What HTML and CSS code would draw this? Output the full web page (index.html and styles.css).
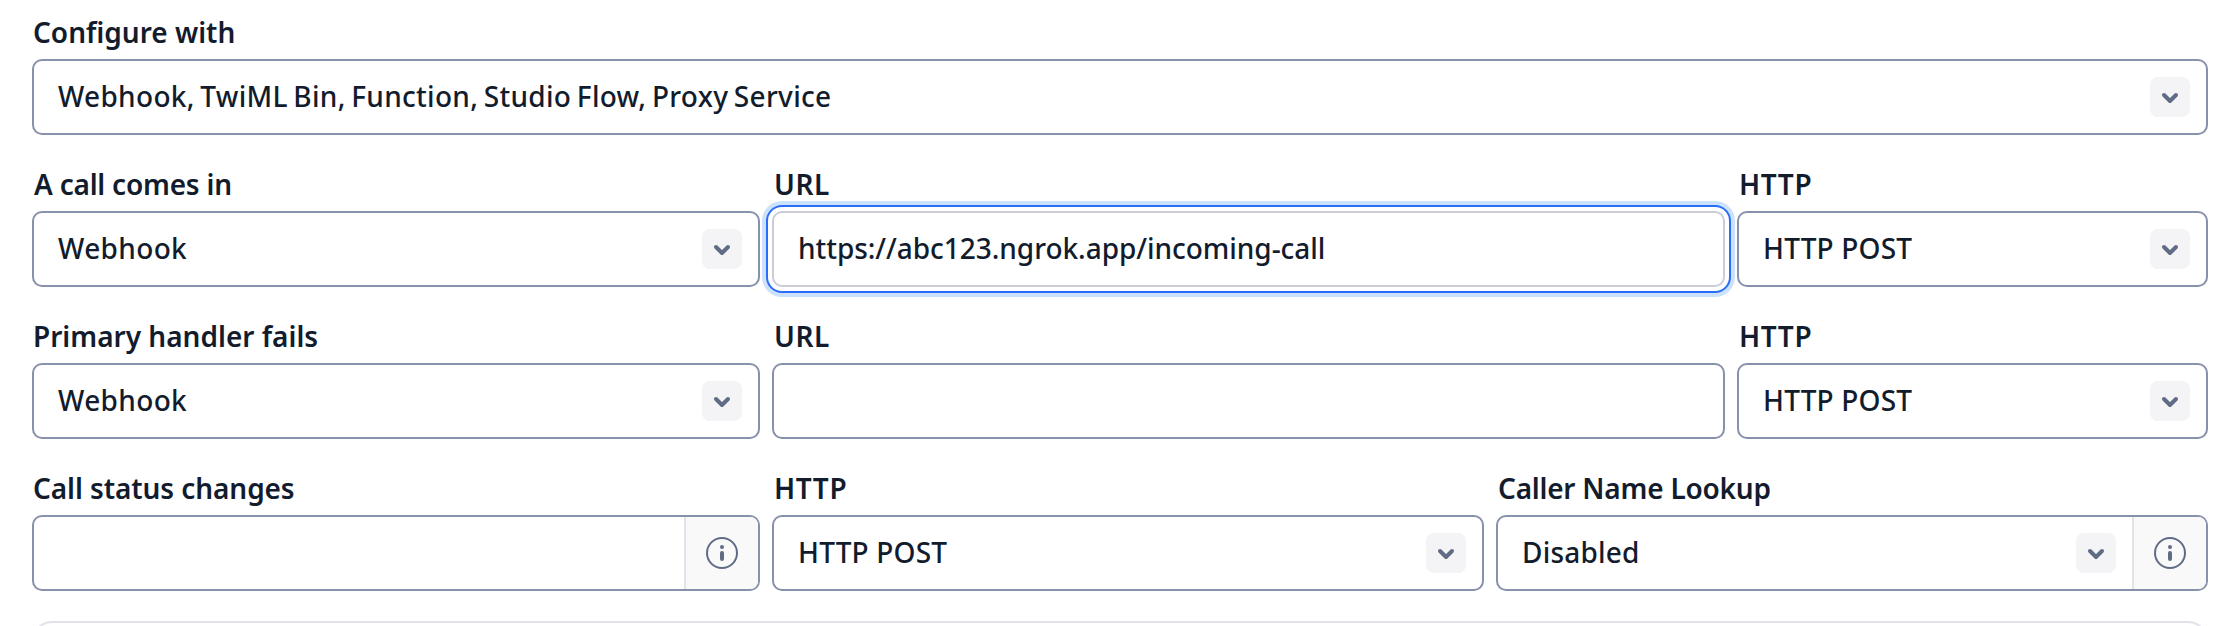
FILE: index.html
```
<!DOCTYPE html>
<html lang="en">
<head>
<meta charset="utf-8">
<title>Voice configuration</title>
<link rel="stylesheet" href="styles.css">
</head>
<body>
<svg class="sprite" aria-hidden="true">
  <symbol id="chevron" viewBox="0 0 40 40"><path d="M14 18l6 6 6-6" fill="none" stroke="currentColor" stroke-width="4" stroke-linecap="round" stroke-linejoin="round"/></symbol>
  <symbol id="info" viewBox="0 0 32 32"><circle cx="16" cy="16" r="15" fill="none" stroke="currentColor" stroke-width="2"/><circle cx="16" cy="10" r="2" fill="currentColor"/><rect x="14" y="14" width="4" height="10" rx="2" fill="currentColor"/></symbol>
</svg>
<main class="form">
  <div class="row">
    <div class="field">
      <div class="label">Configure with</div>
      <div class="control"><span class="value list">Webhook, TwiML Bin, Function, Studio Flow, Proxy Service</span><svg class="chevron"><use href="#chevron"/></svg></div>
    </div>
  </div>
  <div class="row handler">
    <div class="field">
      <div class="label tight">A call comes in</div>
      <div class="control"><span class="value word">Webhook</span><svg class="chevron"><use href="#chevron"/></svg></div>
    </div>
    <div class="field">
      <div class="label caps">URL</div>
      <div class="control focused"><span class="value url">https://abc123.ngrok.app/incoming-call</span></div>
    </div>
    <div class="field">
      <div class="label caps">HTTP</div>
      <div class="control"><span class="value method">HTTP POST</span><svg class="chevron"><use href="#chevron"/></svg></div>
    </div>
  </div>
  <div class="row handler">
    <div class="field">
      <div class="label">Primary handler fails</div>
      <div class="control"><span class="value word">Webhook</span><svg class="chevron"><use href="#chevron"/></svg></div>
    </div>
    <div class="field">
      <div class="label caps">URL</div>
      <div class="control"></div>
    </div>
    <div class="field">
      <div class="label caps">HTTP</div>
      <div class="control"><span class="value method">HTTP POST</span><svg class="chevron"><use href="#chevron"/></svg></div>
    </div>
  </div>
  <div class="row status">
    <div class="field">
      <div class="label status-label">Call status changes</div>
      <div class="control"><span class="value"></span><span class="suffix"><svg class="info"><use href="#info"/></svg></span></div>
    </div>
    <div class="field">
      <div class="label caps">HTTP</div>
      <div class="control"><span class="value method">HTTP POST</span><svg class="chevron"><use href="#chevron"/></svg></div>
    </div>
    <div class="field">
      <div class="label tight">Caller Name Lookup</div>
      <div class="control"><span class="value method">Disabled</span><svg class="chevron"><use href="#chevron"/></svg><span class="suffix"><svg class="info"><use href="#info"/></svg></span></div>
    </div>
  </div>
</main>
<section class="panel-peek"><div class="panel"></div></section>
</body>
</html>
```
FILE: styles.css
```
* { box-sizing: border-box; }
body {
  margin: 0;
  height: 626px;
  overflow: hidden;
  padding: 12px 22px 0 32px;
  background: #fff;
  color: #121c2d;
  font-family: "Noto Sans", sans-serif;
  font-size: 28px;
}
.sprite { display: none; }
.form { display: grid; gap: 29px; }
.row { display: grid; gap: 12px; width: 2176px; }
.handler { grid-template-columns: 728px 953px 471px; }
.status { grid-template-columns: 728px 712px 712px; }
.label {
  height: 47px;
  padding-left: 1px;
  font-weight: 600;
  line-height: 40px;
  white-space: nowrap;
}
.label.tight { padding-left: 2px; letter-spacing: -0.22px; }
.label.status-label { letter-spacing: -0.08px; }
.label.caps { padding-left: 2px; letter-spacing: 0.6px; }
.control {
  display: flex;
  align-items: center;
  height: 76px;
  border: 2px solid #8891aa;
  border-radius: 10px;
  background: #fff;
}
.control.focused {
  border-color: #cacdd8;
  box-shadow: 0 0 0 4px #fff, 0 0 0 6px #296df8, 0 0 0 10px #cce1fc;
}
.value {
  flex: 1;
  padding: 0 24px 2px;
  font-weight: 500;
  line-height: 38px;
  white-space: nowrap;
}
.value.list { letter-spacing: 0.3px; word-spacing: -2px; }
.value.word { letter-spacing: 0.35px; }
.value.url { letter-spacing: -0.04px; }
.value.method { letter-spacing: 0.2px; }
.chevron {
  width: 40px;
  height: 40px;
  margin-right: 16px;
  border-radius: 8px;
  background: #f4f4f6;
  color: #606b85;
}
.suffix {
  display: grid;
  place-items: center;
  width: 74px;
  height: 100%;
  border-left: 2px solid #e1e3ea;
  border-radius: 0 8px 8px 0;
  background: #f9f9fa;
  color: #606b85;
}
.info { display: block; width: 32px; height: 32px; }
/* Only the top edge of the next panel shows. */
.panel-peek {
  width: 2176px;
  height: 5px;
  margin-top: 30px;
  overflow: hidden;
}
.panel {
  height: 44px;
  border: 2px solid #e1e3ea;
  border-radius: 20px;
}
```
